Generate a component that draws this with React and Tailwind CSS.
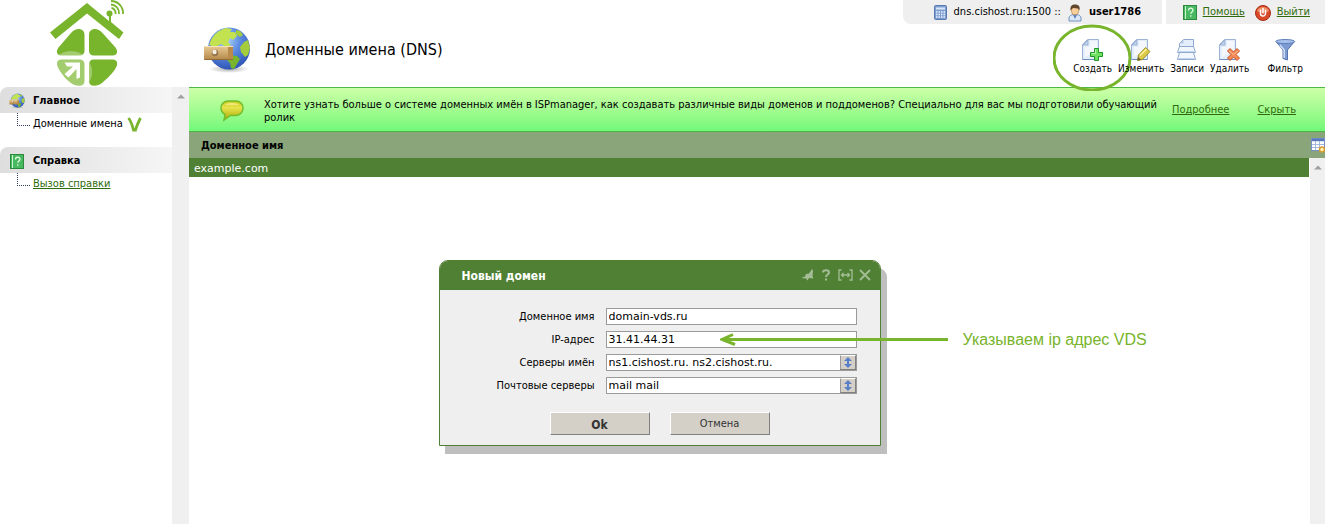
import React from "react";

const TAHOMA = "font-['DejaVu_Sans_Condensed','Noto_Sans',sans-serif]";
const VERDANA = "font-['DejaVu_Sans',sans-serif]";

function Logo() {
  return (
    <svg width="76" height="87" viewBox="49 0 76 87" aria-hidden="true">
      <g fill="#78b42c">
        <path d="M87 3L50 32.500L55.500 39L87 13.500L119 39L123.500 32.500L111 22V13h-2v8z" />
        <circle cx="109.500" cy="13.500" r="3" />
        <path d="M84.500 35V51a4.500 4.500 0 0 1-4.500 4.500H61c-4 0-5.500-4-2.500-8L71 33c5-6 13.500-5 13.500 2z" />
        <path d="M89 35V51a4.500 4.500 0 0 0 4.500 4.500H113c4 0 5.500-4 2.500-8L102.500 33c-5-6-13.500-5-13.500 2z" />
        <path d="M89 81V64a4.500 4.500 0 0 1 4.500-4.500H113c4 0 5.500 4 3 8-3 6-9 11-14 15.500-5 4-13 4-13-2z" />
        <path d="M84.500 81V64a4.500 4.500 0 0 0-4.500-4.500H61c-4 0-5 4-3 8 3 6 8 12 13 15.500 5 4 13.500 4 13.500-2z" />
      </g>
      <circle cx="71" cy="72" r="21" fill="#fff" opacity=".32" />
      <path d="M64.500 62.500H80V77.500L76.500 79V69L68.500 77.500L64.500 74L73 66.500H67z" fill="#fff" />
      <g fill="none" stroke="#78b42c" strokeWidth="1.800">
        <path d="M111.500 8a5 5 0 0 1 4 6" />
        <path d="M111 4.500a8.500 8.500 0 0 1 8 9.500" />
        <path d="M111 1a12 12 0 0 1 12 13" />
      </g>
    </svg>
  );
}

function Globe({ size }) {
  return (
    <svg width={size} height={size} viewBox="0 0 48 48" aria-hidden="true">
      <defs>
        <radialGradient id="sea" cx=".42" cy=".3" r=".7">
          <stop offset="0" stopColor="#b5d5ff" />
          <stop offset=".5" stopColor="#5b8be0" />
          <stop offset="1" stopColor="#2f55b5" />
        </radialGradient>
        <linearGradient id="wood" x1="0" y1="0" x2="0" y2="1">
          <stop offset="0" stopColor="#e8cb94" />
          <stop offset="1" stopColor="#b38748" />
        </linearGradient>
        <radialGradient id="ground">
          <stop offset="0" stopColor="#888" stopOpacity=".7" />
          <stop offset="1" stopColor="#888" stopOpacity="0" />
        </radialGradient>
      </defs>
      <ellipse cx="26" cy="43" rx="20" ry="4" fill="url(#ground)" />
      <circle cx="26" cy="22.500" r="21" fill="url(#sea)" />
      <path d="M8 14C11 8 16 4 23 2l6 1-2 3 5 0 2 4-4 4-3-2-2 4 3 3-5 2-5-3-6 3-6-2z" fill="#c3e250" />
      <path d="M33 4l4 1 3 4-3 2-4-3zM41 16l4-2 2 8-2 7-3 2-4-5-1-5z" fill="#a5cc3c" />
      <path d="M26 29l8 1 3 3-3 5-3 5-3-1-1-5-4-4z" fill="#79b52c" />
      <rect x="1" y="20" width="29" height="14" rx="1" fill="url(#wood)" />
      <path d="M25 20.500h5v13h-5z" fill="#b98a4a" />
      <path d="M1.500 20.500H30" stroke="#f6e3ba" />
      <path d="M1.500 33.500H30" stroke="#916a34" />
      <circle cx="12" cy="27" r="3.200" fill="#94744a" />
      <circle cx="11.500" cy="26" r="2.200" fill="#f6f0e2" />
    </svg>
  );
}

function Book() {
  return (
    <svg width="14" height="15" viewBox="0 0 14 15" aria-hidden="true">
      <rect x=".5" y=".5" width="13" height="14" fill="#48b960" stroke="#2c8a40" />
      <path d="M2.500 1v13" stroke="#c9f5cf" />
      <path d="M5.500 5.500c0-3 4.500-3 4.500-.3 0 1.800-2.200 1.800-2.200 3.600M7.800 10.200v1.500" fill="none" stroke="#e9ffe9" strokeWidth="1.200" />
    </svg>
  );
}

function Server() {
  return (
    <svg width="13" height="15" viewBox="0 0 13 15" aria-hidden="true">
      <rect x=".5" y=".5" width="12" height="14" rx="1" fill="#7f9fd0" stroke="#5878b0" />
      <path d="M2 2.500h9v2H2z" fill="#d9e7fb" />
      <path d="M2 7h9M2 9.500h9M2 12h9" stroke="#e9f1ff" strokeWidth="1.300" strokeDasharray="1.500 1" />
    </svg>
  );
}

function Person() {
  return (
    <svg width="14" height="18" viewBox="0 0 14 18" aria-hidden="true">
      <path d="M1 17v-3c0-2 2-3 4-3.500h4c2 .5 4 1.500 4 3.500v3z" fill="#dbe7f7" stroke="#7292c0" />
      <path d="M5 11l2 4 2-4z" fill="#5c84c2" />
      <ellipse cx="7" cy="6.500" rx="3.500" ry="4.300" fill="#f8cf9c" stroke="#b8803f" strokeWidth=".7" />
      <path d="M2.500 6.500C2 2 4 .5 7 .5s5.500 1.500 4.500 6L10 4.500 5 4z" fill="#63452b" />
    </svg>
  );
}

function Power() {
  return (
    <svg width="16" height="16" viewBox="0 0 16 16" aria-hidden="true">
      <circle cx="8" cy="8" r="7.500" fill="#d94a28" stroke="#a82e16" />
      <path d="M2 6a6.500 6.500 0 0 1 12 0c-3 2-9 2-12 0z" fill="#f0906a" />
      <path d="M5.500 4.700V8.500a2.500 2.500 0 0 0 5 0V4.700M8 3v5.500" fill="none" stroke="#fff" strokeWidth="1.500" />
    </svg>
  );
}

function Bubble() {
  return (
    <svg width="24" height="22" viewBox="0 0 24 22" aria-hidden="true">
      <defs>
        <linearGradient id="bubble" x1="0" y1="0" x2="0" y2="1">
          <stop offset="0" stopColor="#cbc817" />
          <stop offset=".35" stopColor="#e6e44e" />
          <stop offset="1" stopColor="#aaa900" />
        </linearGradient>
      </defs>
      <path d="M8 1h8c4 0 7 3 7 7s-3 7.500-7 7.500H10.500L4 20l1-5.500C2.500 13 1 11 1 8c0-4 3-7 7-7z" fill="url(#bubble)" stroke="#70bd2d" strokeWidth="1.500" />
      <path d="M5 5c2-3 11-3 14 0z" fill="#f3f29a" opacity=".7" />
    </svg>
  );
}

const Sheet = () => (
  <>
    <path d="M6.500 1.500H17.500V21.500H1.500V6.500z" fill="#e4eefb" stroke="#9db4d6" />
    <path d="M7 2L2 7H7z" fill="#c3d5ee" stroke="#8ba5cc" strokeWidth=".8" />
    <path d="M9 3H16V12L4 19V9H9z" fill="#fff" opacity=".6" />
    <path d="M1.500 21.500H17.500" stroke="#6f8fc2" />
  </>
);

const TOOL_ICONS = {
  create: (
    <>
      <Sheet />
      <path d="M13.500 10.500h4v4h4v4h-4v4h-4v-4h-4v-4h4z" fill="#6fe060" stroke="#1f9426" />
      <path d="M14.500 11.500v4H10.500" fill="none" stroke="#b8f4b0" />
    </>
  ),
  edit: (
    <>
      <Sheet />
      <path d="M8.500 17L15.500 9.500L20 13.500L12.500 21.500L7.500 22.500z" fill="#dccb48" stroke="#9a8e30" />
      <path d="M10 17.500L16.500 11" stroke="#fff49d" strokeWidth="1.500" />
      <path d="M7.500 22.500L8.200 19L11 21.800z" fill="#6a5b32" />
    </>
  ),
  records: (
    <>
      <path d="M7.500 1.500H17.500V8.500H3.500V5.500z" fill="#e4eefb" stroke="#8fa9cf" />
      <path d="M7.500 2L4 5.500H7.500z" fill="#b6cae6" />
      <path d="M3.500 8.500H17.500L19.500 14.500H1.500z" fill="#f2f7fe" stroke="#8fa9cf" />
      <path d="M3.500 14.500H17.500L19.500 21.500H1.500z" fill="#f2f7fe" stroke="#8fa9cf" />
      <path d="M3 13.500H18M3 20.500H18" stroke="#c4d5ee" />
    </>
  ),
  remove: (
    <>
      <Sheet />
      <path d="M9.500 13l2.500-2.500 3.500 3.500 3.500-3.500L21.500 13 18 16.500l3.500 3.500-2.500 2.500-3.500-3.500-3.500 3.500L9.500 20l3.500-3.500z" fill="#f58a58" stroke="#c4501f" />
      <path d="M11 13l4.500 3.500 4.500-3.500" fill="none" stroke="#ffc09a" />
    </>
  ),
  filter: (
    <>
      <path d="M2 3.500L9 12V20.500L13.500 22V12L20.500 3.500z" fill="#7b9ad2" stroke="#5674ad" />
      <path d="M6 7L10.200 12V20" fill="none" stroke="#cfdff8" strokeWidth="1.500" />
      <ellipse cx="11.200" cy="3.500" rx="9.500" ry="2" fill="#a8c1ed" stroke="#5f7fb8" />
    </>
  ),
};

function Tool({ name, label, className = "", children }) {
  return (
    <button type="button" className={`relative flex flex-col items-center gap-px ${className}`}>
      <svg width="23" height="24" viewBox="0 0 23 24" aria-hidden="true">{TOOL_ICONS[name]}</svg>
      <span className="leading-3">{label}</span>
      {children}
    </button>
  );
}

function MenuGroup({ icon, title, children }) {
  return (
    <section>
      <h2 className="flex h-[26px] items-center rounded-tl-lg bg-linear-to-r from-[#dedede] to-[#f6f6f6] pt-0.5 font-bold">
        <span className="flex w-[33px] justify-center">{icon}</span>
        {title}
      </h2>
      <div className="flex h-5 pl-[17px]">
        <span className="h-[13px] w-[13px] border-b border-l border-dotted border-[#2d3f60]" />
        <div className="flex items-center pt-0.5 pl-[3px]">{children}</div>
      </div>
    </section>
  );
}

function ScrollTrack({ className = "" }) {
  return (
    <div className={`flex shrink-0 justify-center bg-[#f0f0f0] ${className}`}>
      <svg width="8" height="5" viewBox="0 0 8 5" aria-hidden="true"><path d="M0 4.500L4 .5L8 4.500z" fill="#a0a0a0" /></svg>
    </div>
  );
}

function Field({ id, label, value, picker, children }) {
  return (
    <div className="relative flex h-[17px] items-center gap-[11px]">
      <label htmlFor={id} className="w-[155px] shrink-0 pt-0.5 text-right">{label}</label>
      <div className="flex h-full w-[251px] border border-[#9a9a9a] bg-white">
        <input id={id} defaultValue={value} className={`min-w-0 flex-1 bg-white px-0.5 pt-px text-[11px] leading-[14px] outline-none ${VERDANA}`} />
        {picker && (
          <button type="button" aria-label={`${label}: список`} className="flex w-4 items-center justify-center border border-t-white border-r-[#808080] border-b-[#808080] border-l-[#9a9a9a] bg-[#d4d0c8]">
            <svg width="8" height="11" viewBox="0 0 8 11" aria-hidden="true"><path d="M4 0L8 4H5V7H8L4 11L0 7H3V4H0z" fill="#587fc8" /></svg>
          </button>
        )}
      </div>
      {children}
    </div>
  );
}

function DialogIcons() {
  const button = "flex h-4 items-center justify-center";
  return (
    <div className="flex items-center gap-2 text-[#a5bd96]">
      <button type="button" aria-label="Закрепить" className={button}>
        <svg width="13" height="12" viewBox="0 0 13 12"><path d="M11 0L12 1.500L11.500 7L12.500 9.500L8 9L6.500 11.500L5 9.500L0 9L4 7.500L5 5L8 4.500z" fill="currentColor" /></svg>
      </button>
      <button type="button" aria-label="Справка" className={button}>
        <svg width="8" height="12" viewBox="0 0 8 12"><path d="M1 3.500C1 .5 7 .5 7 3.500 7 5.500 4 5.500 4 8M4 9.500v2" fill="none" stroke="currentColor" strokeWidth="2" /></svg>
      </button>
      <button type="button" aria-label="Ширина" className={button}>
        <svg width="15" height="12" viewBox="0 0 15 12"><path d="M3.500 1H1V11H3.500M11.500 1H14V11H11.500M3.500 6H11.500M5.500 4L3.500 6L5.500 8M9.500 4L11.500 6L9.500 8" fill="none" stroke="currentColor" strokeWidth="1.300" /></svg>
      </button>
      <button type="button" aria-label="Закрыть" className={`${button} -ml-0.5`}>
        <svg width="12" height="12" viewBox="0 0 12 12"><path d="M1 1L11 11M11 1L1 11" stroke="currentColor" strokeWidth="1.800" /></svg>
      </button>
    </div>
  );
}

function Dialog() {
  const action = "h-[23px] w-[100px] border border-t-white border-l-white border-r-[#808080] border-b-[#808080] bg-[#d4d0c8] pt-0.5 text-[#333]";
  return (
    <form className="relative w-[442px] rounded-t-[9px] border border-[#4f8034] bg-[#efefef] shadow-[6px_8px_0_#bfbfbf]">
      <header className="flex h-[29px] items-center justify-between rounded-t-lg bg-[#4f8034] pr-[9px] pb-0.5 pl-[22px]">
        <h2 className="pt-0.5 text-[12px] font-bold text-white">Новый домен</h2>
        <DialogIcons />
      </header>
      <div className="flex flex-col gap-1.5 pt-[18px]">
        <Field id="name" label="Доменное имя" value="domain-vds.ru" />
        <Field id="ip" label="IP-адрес" value="31.41.44.31">
          <div className="pointer-events-none absolute left-[280px] flex items-center gap-[15px] whitespace-nowrap">
            <svg width="228" height="13" viewBox="0 0 228 13" aria-hidden="true"><path d="M228 6.500H3M13 1.500L2 6.500L15 11.500" fill="none" stroke="#78b42c" strokeWidth="3" /></svg>
            <span className="font-['Liberation_Sans',sans-serif] text-[16px] text-[#78b42c]">Указываем ip адрес VDS</span>
          </div>
        </Field>
        <Field id="ns" label="Серверы имён" value="ns1.cishost.ru. ns2.cishost.ru." picker />
        <Field id="mx" label="Почтовые серверы" value="mail mail" picker />
      </div>
      <div className="flex justify-center gap-5 pt-[18px] pb-2.5">
        <button type="button" className={`${action} text-[12px] font-bold`}>Ok</button>
        <button type="button" className={action}>Отмена</button>
      </div>
    </form>
  );
}

export default function App() {
  const link = "text-[#2f6b0c] underline";
  return (
    <div className={`relative flex min-h-screen overflow-hidden bg-white text-[11px] text-black ${TAHOMA}`}>
      <aside className="flex w-[189px] shrink-0 flex-col">
        <div className="h-[87px] pl-[49px]"><Logo /></div>
        <div className="flex flex-1">
          <nav className="flex flex-1 flex-col gap-3.5">
            <MenuGroup title="Главное" icon={<Globe size={16} />}>
              <a href="#domains">Доменные имена</a>
              <svg className="ml-1" width="15" height="15" viewBox="0 0 15 15" aria-hidden="true"><path d="M1.500 1C3.500 3.500 5 7 6.500 13H8.500C9.500 9 12 4 13.500 1" fill="none" stroke="#78b42c" strokeWidth="2.800" /></svg>
            </MenuGroup>
            <MenuGroup title="Справка" icon={<Book />}>
              <a href="#help" className={link}>Вызов справки</a>
            </MenuGroup>
          </nav>
          <ScrollTrack className="w-[17px] pt-[7px]" />
        </div>
      </aside>

      <main className="flex min-w-0 flex-1 flex-col">
        <header className="flex h-[87px] justify-between">
          <div className="flex items-center gap-3.5 pt-3 pl-3.5">
            <Globe size={48} />
            <h1 className="text-[16px]">Доменные имена (DNS)</h1>
          </div>
          <div className="flex flex-col items-end">
            <div className="flex h-6 gap-1">
              <div className="flex w-[259px] items-center gap-[7px] rounded-bl-lg bg-[#efefef] pt-px pl-[31px]">
                <Server />
                <span>dns.cishost.ru:1500 ::</span>
                <Person />
                <b>user1786</b>
              </div>
              <div className="flex items-center gap-1.5 bg-[#efefef] pt-px pr-[15px] pl-[17px]">
                <Book />
                <a href="#manual" className={link}>Помощь</a>
                <span className="ml-1"><Power /></span>
                <a href="#logout" className={link}>Выйти</a>
              </div>
            </div>
            <div className="flex pt-3.5 pr-[22px] text-[10px]">
              <Tool name="create" label="Создать" className="mr-1.5">
                <svg className="pointer-events-none absolute top-1/2 left-1/2 -translate-x-1/2 -translate-y-1/2" width="80" height="68" viewBox="0 0 80 68" aria-hidden="true"><ellipse cx="39" cy="35" rx="38" ry="32" fill="none" stroke="#78b42c" strokeWidth="3" /></svg>
              </Tool>
              <Tool name="edit" label="Изменить" className="mr-1.5" />
              <Tool name="records" label="Записи" className="mr-1.5" />
              <Tool name="remove" label="Удалить" className="mr-[18px]" />
              <Tool name="filter" label="Фильтр" />
            </div>
          </div>
        </header>

        <div className="flex h-[45px] items-center border-y border-[#4db848] bg-linear-to-b from-[#ccffa8] to-[#70f878] pt-0.5">
          <span className="flex w-[75px] shrink-0 justify-center pl-2.5"><Bubble /></span>
          <p className="flex-1 leading-[13px]">
            Хотите узнать больше о системе доменных имён в ISPmanager, как создавать различные виды доменов и поддоменов? Специально для вас мы подготовили обучающий ролик
          </p>
          <div className="flex shrink-0 gap-7 pr-[29px] pl-1">
            <a href="#more" className={link}>Подробнее</a>
            <a href="#hide" className={link}>Скрыть</a>
          </div>
        </div>

        <div className="flex h-[26px] items-center justify-between bg-[#8aa57a]">
          <span className="pt-0.5 pl-3 font-bold">Доменное имя</span>
          <button type="button" aria-label="Настройка колонок">
            <svg width="14" height="16" viewBox="0 0 14 16" aria-hidden="true">
              <rect x=".5" y="1.500" width="13" height="12" fill="#fff" stroke="#7590c8" />
              <path d="M1 3h12" stroke="#5878bd" strokeWidth="2.500" />
              <path d="M1 7.500h12M1 10.500h12M4.500 4v9M8.500 4v9" stroke="#a4b8df" />
              <circle cx="11" cy="12.500" r="2.500" fill="#fff2b8" stroke="#d79b2c" strokeWidth="1.500" />
            </svg>
          </button>
        </div>

        <div className="flex flex-1">
          <table className={`flex-1 self-start text-left text-[11px] leading-[17px] ${VERDANA}`}>
            <tbody>
              <tr className="flex bg-[#4f8034] text-white"><td className="w-full pt-0.5 pl-[5px]">example.com</td></tr>
            </tbody>
          </table>
          <ScrollTrack className="ml-px w-[15px] pt-[7px]" />
        </div>
      </main>

      <div className="absolute top-[260px] left-1/2 -translate-x-1/2 pr-1.5">
        <Dialog />
      </div>
    </div>
  );
}
